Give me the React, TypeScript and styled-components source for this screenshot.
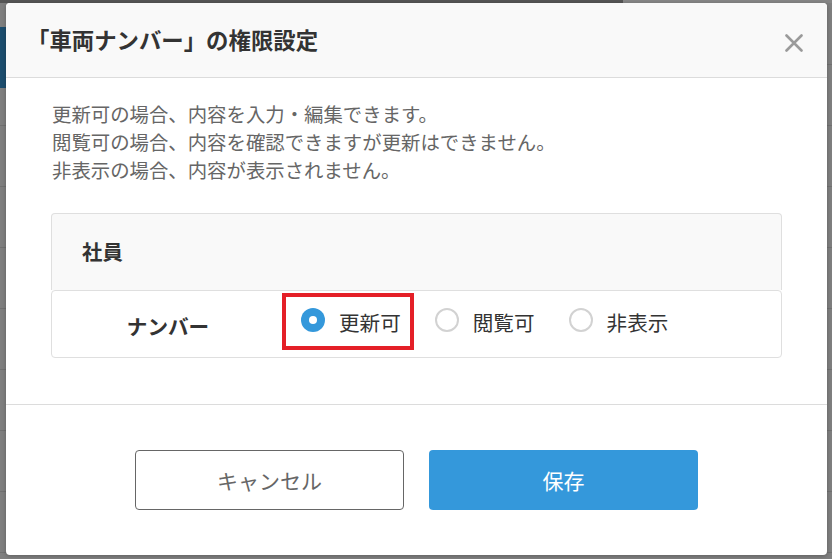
import React from "react";
import styled, { createGlobalStyle } from "styled-components";

const GlobalStyle = createGlobalStyle`
	html, body {
		margin: 0;
		padding: 0;
		background: #7f7f7f;
	}
	body {
		font-family: "Noto Sans CJK JP", "Noto Sans", sans-serif;
	}
	* {
		box-sizing: border-box;
	}
`;

// dimmed page behind the dialog: only its edges show
const Overlay = styled.div`
	width: 832px;
	height: 559px;
	padding: 3px 5px 4px 6px;
	background-color: #7f7f7f;
	background-image:
		linear-gradient(to right, #555 0, #555 623px, #868686 623px),
		linear-gradient(#1c4d6e, #1c4d6e),
		linear-gradient(#8a8a8a, #8a8a8a),
		repeating-linear-gradient(to bottom, transparent 0, transparent 60px, #717171 60px, #717171 61px);
	background-size: 100% 3px, 6px 61px, 3px 17px, 100% 100%;
	background-position: 0 0, 0 27px, 0 48px, 0 4px;
	background-repeat: no-repeat;
`;

const Dialog = styled.div`
	width: 821px;
	height: 552px;
	display: flex;
	flex-direction: column;
	background: #fff;
	border-radius: 4px;
	overflow: hidden;
	box-shadow: 0 1px 4px rgba(0, 0, 0, 0.25);
`;

const Header = styled.div`
	height: 75px;
	flex-shrink: 0;
	display: flex;
	align-items: center;
	justify-content: space-between;
	padding: 0 24px 2px 21px;
	background: #f9f9f9;
	border-bottom: 1px solid #dcdcdc;
`;

const Title = styled.h2`
	margin: 0;
	font-size: 22.4px;
	font-weight: 700;
	color: #333;
`;

const CloseButton = styled.button`
	width: 18px;
	height: 18px;
	padding: 0;
	border: none;
	background: none;
	display: flex;
	cursor: pointer;
	margin-top: 7px;
`;

const Body = styled.div`
	flex: 1;
	padding: 22px 45px 0 45px;
`;

const Notes = styled.div`
	margin: 0 0 29px 1px;
	font-size: 19.4px;
	line-height: 28px;
	color: #666;
`;

const Section = styled.div`
	display: flex;
	flex-direction: column;
`;

const SectionHead = styled.div`
	height: 77px;
	display: flex;
	align-items: center;
	padding: 0 0 2px 30px;
	background: #f9f9f9;
	border: 1px solid #dfdfdf;
	border-bottom: none;
	border-radius: 4px 4px 0 0;
	font-size: 20.4px;
	font-weight: 700;
	color: #333;
`;

const Row = styled.div`
	height: 68px;
	display: flex;
	align-items: center;
	border: 1px solid #dfdfdf;
	border-radius: 4px;
	background: #fff;
`;

const RowLabel = styled.div`
	width: 232px;
	text-align: center;
	font-size: 20.6px;
	font-weight: 700;
	color: #333;
	padding-top: 3px;
`;

const Options = styled.div`
	display: flex;
	align-items: center;
	gap: 34px;
	padding: 0 0 9px 17px;
`;

const Option = styled.label<{ $marked?: boolean }>`
	position: relative;
	display: flex;
	align-items: center;
	gap: 14px;
	font-size: 20.6px;
	color: #333;
	cursor: pointer;

	${(p) =>
		p.$marked &&
		`
		&::after {
			content: "";
			position: absolute;
			left: -19px;
			right: -13px;
			top: -10px;
			bottom: -13px;
			border: 4px solid #e41f27;
			pointer-events: none;
		}
	`}
`;

const Radio = styled.span<{ $checked?: boolean }>`
	width: 24px;
	height: 24px;
	border-radius: 50%;
	flex-shrink: 0;
	display: flex;
	align-items: center;
	justify-content: center;
	background: ${(p) => (p.$checked ? "#3498db" : "#fff")};
	border: ${(p) => (p.$checked ? "none" : "2px solid #d2d2d2")};

	&::before {
		content: "";
		width: 8px;
		height: 8px;
		border-radius: 50%;
		background: #fff;
		display: ${(p) => (p.$checked ? "block" : "none")};
	}
`;

const OptionText = styled.span`
	padding-top: 4px;
`;

const Footer = styled.div`
	height: 151px;
	flex-shrink: 0;
	display: flex;
	justify-content: center;
	align-items: flex-start;
	gap: 25px;
	padding: 45px 0 0 0;
	border-top: 1px solid #dcdcdc;
`;

const Button = styled.button<{ $primary?: boolean }>`
	width: 269px;
	height: 60px;
	border-radius: 4px;
	font-family: inherit;
	font-size: 21px;
	cursor: pointer;
	background: ${(p) => (p.$primary ? "#3498db" : "#fff")};
	color: ${(p) => (p.$primary ? "#fff" : "#666")};
	border: ${(p) => (p.$primary ? "none" : "1px solid #666")};
`;

const choices = [
	{ label: "更新可", checked: true },
	{ label: "閲覧可", checked: false },
	{ label: "非表示", checked: false },
];

const App = () => {
	return (
		<>
			<GlobalStyle />
			<Overlay>
				<Dialog>
					<Header>
						<Title>「車両ナンバー」の権限設定</Title>
						<CloseButton aria-label="閉じる">
							<svg width="18" height="18" viewBox="0 0 18 18">
								<path
									d="M1.5 1.5L16.5 16.5M16.5 1.5L1.5 16.5"
									stroke="#9a9a9a"
									strokeWidth="2.6"
									strokeLinecap="round"
								/>
							</svg>
						</CloseButton>
					</Header>
					<Body>
						<Notes>
							更新可の場合、内容を入力・編集できます。
							<br />
							閲覧可の場合、内容を確認できますが更新はできません。
							<br />
							非表示の場合、内容が表示されません。
						</Notes>
						<Section>
							<SectionHead>社員</SectionHead>
							<Row>
								<RowLabel>ナンバー</RowLabel>
								<Options>
									{choices.map((c) => (
										<Option key={c.label} $marked={c.checked}>
											<Radio $checked={c.checked} />
											<OptionText>{c.label}</OptionText>
										</Option>
									))}
								</Options>
							</Row>
						</Section>
					</Body>
					<Footer>
						<Button>キャンセル</Button>
						<Button $primary>保存</Button>
					</Footer>
				</Dialog>
			</Overlay>
		</>
	);
};

export default App;
